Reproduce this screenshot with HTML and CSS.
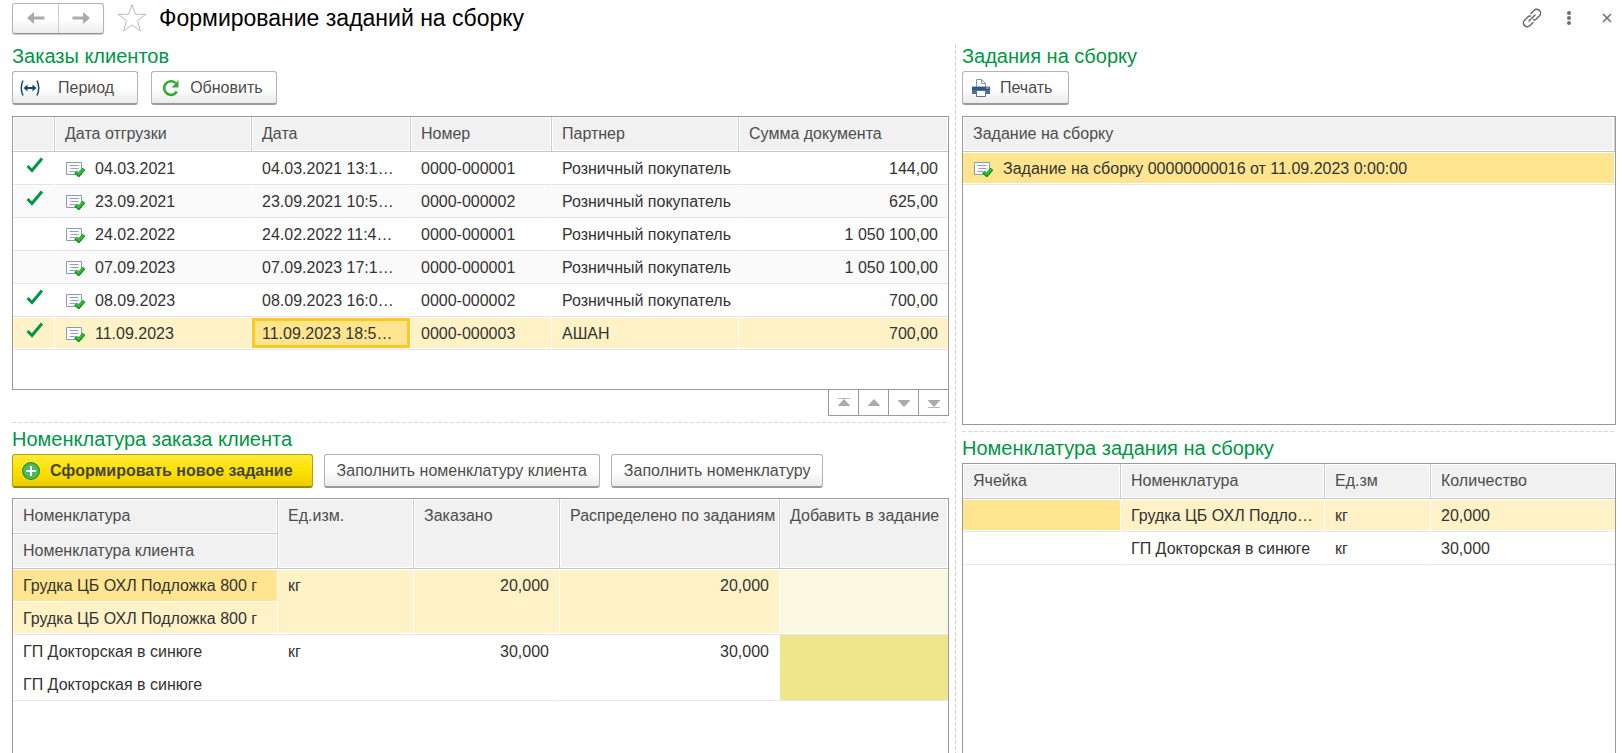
FILE: index.html
```html
<!DOCTYPE html>
<html lang="ru">
<head>
<meta charset="utf-8">
<meta name="viewport" content="width=device-width, initial-scale=1">
<title>Формирование заданий на сборку</title>
<link rel="stylesheet" href="styles.css">
</head>
<body>
<svg class="sprite" aria-hidden="true">
  <symbol id="tick" viewBox="0 0 18 16"><path d="M1.500 9L6 13.500L16 1.500" fill="none" stroke="#009646" stroke-width="3"/></symbol>
  <symbol id="doc" viewBox="0 0 20 16">
    <path d="M1.500 1.500h15v12h-15z" fill="#fafcfe" stroke="#8a9bb0"/>
    <path d="M4.500 4.500h9M5.500 7.500h8M4.500 10.500h6" stroke="#93a1b3"/>
    <path d="M10.500 11l3.200 3L19 7.800" fill="none" stroke="#0c8a14" stroke-width="3.600"/>
    <path d="M11.200 11l2.500 2.300L18.500 8.200" fill="none" stroke="#2fc234" stroke-width="2"/>
  </symbol>
</svg>

<header class="titlebar">
  <div class="nav">
    <button type="button" class="nav-btn" aria-label="Назад"><svg width="18" height="14" viewBox="0 0 18 14"><path d="M0 7l7-6v4.500h10.500v3H7V13z" fill="#ababab"/></svg></button>
    <button type="button" class="nav-btn" aria-label="Вперед"><svg width="18" height="14" viewBox="0 0 18 14"><path d="M18 7l-7-6v4.500H.5v3H11V13z" fill="#ababab"/></svg></button>
  </div>
  <button type="button" class="icon-btn star" aria-label="Избранное"><svg width="30" height="30" viewBox="0 0 30 30"><path d="M15 1.500l3.400 9.800h10.300l-8.300 6.400 3.100 10.300L15 21.900 6.500 28l3.100-10.300-8.300-6.400h10.300z" fill="none" stroke="#b4bcc4"/></svg></button>
  <h1 class="title">Формирование заданий на сборку</h1>
  <div class="window-tools">
    <button type="button" class="icon-btn" aria-label="Ссылка"><svg width="20" height="20" viewBox="0 0 20 20" fill="none" stroke="#6a6a6a" stroke-width="1.500" stroke-linecap="round"><path d="M7 13l6-6M9 5.500l3-3a3.700 3.700 0 0 1 5.500 5.300l-3.200 3.200a3.700 3.700 0 0 1-2.800 1M11 14.500l-3 3A3.700 3.700 0 0 1 2.500 12.200L5.700 9a3.700 3.700 0 0 1 2.800-1"/></svg></button>
    <button type="button" class="icon-btn" aria-label="Еще"><svg width="6" height="16" viewBox="0 0 6 16" fill="#6f6f6f"><circle cx="3" cy="3" r="2"/><circle cx="3" cy="8" r="2"/><circle cx="3" cy="13" r="2"/></svg></button>
    <button type="button" class="icon-btn" aria-label="Закрыть"><svg width="10" height="10" viewBox="0 0 10 10"><path d="M1 1l8 8M9 1L1 9" stroke="#707070" stroke-width="1.600"/></svg></button>
  </div>
</header>

<main class="workspace">
  <div class="column">
    <section class="pane">
      <h2 class="heading">Заказы клиентов</h2>
      <div class="toolbar toolbar-orders">
        <button type="button" class="btn btn-period"><svg width="20" height="18" viewBox="0 0 20 18" fill="none" stroke="#1c4668"><path d="M3 1.500q-3.500 7.500 0 15M17 1.500q3.500 7.500 0 15" stroke-width="1.500"/><path d="M5 9h10" stroke-width="2"/><path d="M3.500 9l4-3.500v7zM16.500 9l-4-3.500v7z" fill="#1c4668" stroke="none"/></svg>Период</button>
        <button type="button" class="btn btn-refresh"><svg width="18" height="18" viewBox="0 0 18 18"><path d="M14.800 12.500A6.800 6.800 0 1 1 13.500 4" fill="none" stroke="#34a936" stroke-width="2.600"/><path d="M16.500 1v7.500H9.500z" fill="#34a936"/></svg>Обновить</button>
      </div>
      <div class="list list-orders">
        <table class="grid">
          <colgroup><col class="w-mark"><col class="w-ship"><col class="w-date"><col class="w-number"><col class="w-partner"><col></colgroup>
          <thead><tr><th aria-label="Отметка"></th><th>Дата отгрузки</th><th>Дата</th><th>Номер</th><th>Партнер</th><th>Сумма документа</th></tr></thead>
          <tbody class="striped">
            <tr><td class="mark"><svg class="tick"><use href="#tick"/></svg></td><td><span class="with-icon"><svg class="doc"><use href="#doc"/></svg>04.03.2021</span></td><td>04.03.2021 13:1…</td><td>0000-000001</td><td>Розничный покупатель</td><td class="num">144,00</td></tr>
            <tr><td class="mark"><svg class="tick"><use href="#tick"/></svg></td><td><span class="with-icon"><svg class="doc"><use href="#doc"/></svg>23.09.2021</span></td><td>23.09.2021 10:5…</td><td>0000-000002</td><td>Розничный покупатель</td><td class="num">625,00</td></tr>
            <tr><td class="mark"></td><td><span class="with-icon"><svg class="doc"><use href="#doc"/></svg>24.02.2022</span></td><td>24.02.2022 11:4…</td><td>0000-000001</td><td>Розничный покупатель</td><td class="num">1 050 100,00</td></tr>
            <tr><td class="mark"></td><td><span class="with-icon"><svg class="doc"><use href="#doc"/></svg>07.09.2023</span></td><td>07.09.2023 17:1…</td><td>0000-000001</td><td>Розничный покупатель</td><td class="num">1 050 100,00</td></tr>
            <tr><td class="mark"><svg class="tick"><use href="#tick"/></svg></td><td><span class="with-icon"><svg class="doc"><use href="#doc"/></svg>08.09.2023</span></td><td>08.09.2023 16:0…</td><td>0000-000002</td><td>Розничный покупатель</td><td class="num">700,00</td></tr>
            <tr class="selected"><td class="mark"><svg class="tick"><use href="#tick"/></svg></td><td><span class="with-icon"><svg class="doc"><use href="#doc"/></svg>11.09.2023</span></td><td class="focused">11.09.2023 18:5…</td><td>0000-000003</td><td>АШАН</td><td class="num">700,00</td></tr>
          </tbody>
        </table>
      </div>
      <div class="pager">
        <button type="button" class="pager-btn" aria-label="В начало"><svg width="14" height="10" viewBox="0 0 14 10"><path d="M1 .5h12" stroke="#b8b8b8"/><path d="M7 1l6.500 7H.5z" fill="#ababab"/></svg></button>
        <button type="button" class="pager-btn" aria-label="Вверх"><svg width="14" height="10" viewBox="0 0 14 10"><path d="M7 1l6.500 7H.5z" fill="#ababab"/></svg></button>
        <button type="button" class="pager-btn" aria-label="Вниз"><svg width="14" height="10" viewBox="0 0 14 10"><path d="M7 9L.5 2h13z" fill="#ababab"/></svg></button>
        <button type="button" class="pager-btn" aria-label="В конец"><svg width="14" height="10" viewBox="0 0 14 10"><path d="M1 9.500h12" stroke="#b8b8b8"/><path d="M7 9L.5 2h13z" fill="#ababab"/></svg></button>
      </div>
    </section>
    <hr class="split-h">
    <section class="pane pane-fill">
      <h2 class="heading">Номенклатура заказа клиента</h2>
      <div class="toolbar">
        <button type="button" class="btn btn-primary"><svg width="18" height="18" viewBox="0 0 18 18"><circle cx="9" cy="9" r="8.400" fill="#4cb95a" stroke="#23913a" stroke-width="1.200"/><path d="M9 4v10M4 9h10" stroke="#fff" stroke-width="2"/></svg>Сформировать новое задание</button>
        <button type="button" class="btn">Заполнить номенклатуру клиента</button>
        <button type="button" class="btn">Заполнить номенклатуру</button>
      </div>
      <div class="list list-open">
        <table class="grid">
          <colgroup><col class="w-item"><col class="w-unit"><col class="w-ordered"><col class="w-assigned"><col></colgroup>
          <thead>
            <tr><th>Номенклатура</th><th rowspan="2">Ед.изм.</th><th rowspan="2">Заказано</th><th rowspan="2">Распределено по заданиям</th><th rowspan="2">Добавить в задание</th></tr>
            <tr><th>Номенклатура клиента</th></tr>
          </thead>
          <tbody>
            <tr class="selected"><td class="current upper">Грудка ЦБ ОХЛ Подложка 800 г</td><td rowspan="2">кг</td><td rowspan="2" class="num">20,000</td><td rowspan="2" class="num">20,000</td><td rowspan="2" class="entry-light"></td></tr>
            <tr class="selected"><td class="lower">Грудка ЦБ ОХЛ Подложка 800 г</td></tr>
            <tr><td class="upper">ГП Докторская в синюге</td><td rowspan="2">кг</td><td rowspan="2" class="num">30,000</td><td rowspan="2" class="num">30,000</td><td rowspan="2" class="entry"></td></tr>
            <tr><td>ГП Докторская в синюге</td></tr>
          </tbody>
        </table>
      </div>
    </section>
  </div>

  <div class="split-v"></div>

  <div class="column">
    <section class="pane">
      <h2 class="heading">Задания на сборку</h2>
      <div class="toolbar toolbar-orders">
        <button type="button" class="btn btn-print"><svg width="18" height="18" viewBox="0 0 18 18"><path d="M4.500 8V.5h5l4 4V8" fill="#fff" stroke="#8593a5"/><path d="M9.500.5v4h4" fill="none" stroke="#8593a5"/><path d="M1 7.500h16q1 0 1 1V15H0V8.500q0-1 1-1z" fill="#4a6f9c"/><path d="M0 8h18v3H0z" fill="#345780"/><path d="M14.500 9h2" stroke="#fff"/><path d="M4.500 11.500h9v6h-9z" fill="#fff" stroke="#58728f"/></svg>Печать</button>
      </div>
      <div class="list list-tasks">
        <table class="grid">
          <thead><tr><th>Задание на сборку</th></tr></thead>
          <tbody><tr class="selected"><td class="current"><span class="with-icon"><svg class="doc"><use href="#doc"/></svg>Задание на сборку 00000000016 от 11.09.2023 0:00:00</span></td></tr></tbody>
        </table>
      </div>
    </section>
    <hr class="split-h">
    <section class="pane pane-fill">
      <h2 class="heading">Номенклатура задания на сборку</h2>
      <div class="list list-open">
        <table class="grid">
          <colgroup><col class="w-cell"><col class="w-task-item"><col class="w-task-unit"><col></colgroup>
          <thead><tr><th>Ячейка</th><th>Номенклатура</th><th>Ед.зм</th><th>Количество</th></tr></thead>
          <tbody>
            <tr class="selected"><td class="current"></td><td>Грудка ЦБ ОХЛ Подло…</td><td>кг</td><td>20,000</td></tr>
            <tr><td></td><td>ГП Докторская в синюге</td><td>кг</td><td>30,000</td></tr>
          </tbody>
        </table>
      </div>
    </section>
  </div>
</main>
</body>
</html>
```

FILE: styles.css
```css
* { box-sizing: border-box; }

body {
  margin: 0;
  height: 100vh;
  overflow: hidden;
  display: flex;
  flex-direction: column;
  background: #fff;
  color: #333;
  font: 16px/18px "Liberation Sans", Arial, sans-serif;
}

button { font: inherit; color: #4d4d4d; }
svg { display: block; flex: none; }
.sprite { position: absolute; width: 0; height: 0; }

/* Title bar */
.titlebar {
  display: flex;
  align-items: center;
  flex: none;
  height: 44px;
  padding: 0 10px 8px 12px;
}
.nav {
  display: flex;
  height: 31px;
  border: 1px solid #b3b3b3;
  border-bottom-color: #8f8f8f;
  border-radius: 3px;
  background: linear-gradient(#fff 50%, #ededed);
  box-shadow: 0 1px 1px #ccc;
}
.nav-btn {
  display: flex;
  align-items: center;
  justify-content: center;
  width: 45px;
  padding: 0;
  border: 0;
  background: none;
}
.nav-btn + .nav-btn { border-left: 1px solid #ccc; }
.icon-btn { padding: 0; border: 0; background: none; }
.star { margin: 0 12px 0 13px; }
.title {
  margin: 0;
  color: #000;
  font-size: 23px;
  font-weight: 400;
  line-height: 28px;
}
.window-tools {
  display: flex;
  align-items: center;
  gap: 24px;
  margin-left: auto;
}
.window-tools .icon-btn:last-child { margin-left: 6px; }

/* Work area */
.workspace {
  flex: 1;
  min-height: 0;
  display: grid;
  grid-template-columns: 937fr 13px 654fr;
  padding: 0 6px 0 12px;
}
.column { display: flex; flex-direction: column; min-width: 0; min-height: 0; }
.pane { display: flex; flex-direction: column; flex: none; }
.pane-fill { flex: 1; min-height: 0; }
.heading {
  margin: 0 0 3px;
  color: #009646;
  font-size: 20px;
  font-weight: 400;
  line-height: 24px;
}
.split-h {
  flex: none;
  width: 100%;
  height: 1px;
  margin: 6px 0 4px;
  border: 0;
  background: repeating-linear-gradient(90deg, #d6d6d6 0 4px, transparent 4px 6px);
}
.split-v {
  width: 1px;
  justify-self: center;
  background: repeating-linear-gradient(#d0d0d0 0 4px, transparent 4px 6px);
}

/* Buttons */
.toolbar { display: flex; gap: 11px; margin-bottom: 10px; }
.toolbar-orders { gap: 13px; margin-bottom: 11px; }
.btn {
  display: flex;
  align-items: center;
  gap: 10px;
  height: 34px;
  padding: 0 12px;
  border: 1px solid #b3b3b3;
  border-bottom: 2px solid #9a9a9a;
  border-radius: 3px;
  background: linear-gradient(#fff 50%, #ebebeb);
  white-space: nowrap;
}
.btn-period { gap: 18px; padding: 0 23px 0 7px; }
.btn-refresh { padding: 0 13px 0 10px; }
.btn-print { padding: 0 16px 0 9px; }
.btn-primary {
  padding: 0 19px 0 9px;
  border-color: #b5a000;
  border-bottom-color: #998800;
  background: linear-gradient(#ffea3a, #ffe100 50%, #ebcd00);
  font-weight: 700;
  color: #444;
}

/* Lists */
.list { border: 1px solid #999; overflow: hidden; }
.list-orders { height: 274px; }
.list-tasks { height: 309px; }
.list-open { flex: 1; border-bottom: 0; }
.grid {
  width: 100%;
  table-layout: fixed;
  border-collapse: separate;
  border-spacing: 0;
}
.grid th,
.grid td {
  padding: 8px 10px 6px;
  text-align: left;
  vertical-align: top;
  white-space: nowrap;
  border-right: 1px solid transparent;
  border-bottom: 1px solid #e5e5e5;
}
.grid th {
  height: 35px;
  padding: 8px 10px;
  color: #4d4d4d;
  font-weight: 400;
  background: #f1f1f1;
  border-right-color: #ccc;
  border-bottom-color: #c6c6c6;
  box-shadow: inset 0 0 0 1px #fff;
}
.grid td { height: 33px; }
.grid tr > :nth-last-child(1):not(:only-child) { border-right: 0; }
.grid .num { text-align: right; }
.grid .mark { padding: 5px 0 0 13px; }
.striped tr:nth-child(even):not(.selected) { background: #fafafa; }

.grid .selected td {
  background: #fff2c7;
  border-right-color: #fff;
  box-shadow: inset 0 1px #fff, inset 0 -1px #fff;
}
.grid .selected .current { background: #ffe58f; }
.grid .selected .focused {
  background: #ffe58f;
  box-shadow: inset 0 1px #fff, inset 0 -1px #fff, inset 0 4px #fbc91f,
    inset 0 -4px #fbc91f, inset 3px 0 #fbc91f, inset -3px 0 #fbc91f;
}
.grid .upper { border-bottom-color: #fff; }
.grid .selected .upper { box-shadow: inset 0 1px #fff; }
.grid .selected .lower { box-shadow: inset 0 -1px #fff; }
.grid .selected .entry-light { background: #fbf8e1; }
.grid .entry { background: #f0e68c; }

.tick { width: 18px; height: 16px; }
.doc { width: 20px; height: 16px; }
.with-icon { display: flex; align-items: center; gap: 10px; }

.w-mark { width: 42px; }
.w-ship { width: 197px; }
.w-date { width: 159px; }
.w-number { width: 141px; }
.w-partner { width: 187px; }
.w-item { width: 265px; }
.w-unit { width: 136px; }
.w-ordered { width: 146px; }
.w-assigned { width: 220px; }
.w-cell { width: 158px; }
.w-task-item { width: 204px; }
.w-task-unit { width: 106px; }

/* Row navigation under the order list */
.pager { display: flex; justify-content: flex-end; }
.pager-btn {
  display: flex;
  align-items: center;
  justify-content: center;
  width: 30px;
  height: 26px;
  padding: 0;
  border: 1px solid #999;
  border-width: 0 1px 1px 0;
  background: #fff;
}
.pager-btn:first-child { width: 31px; border-left-width: 1px; }
```
